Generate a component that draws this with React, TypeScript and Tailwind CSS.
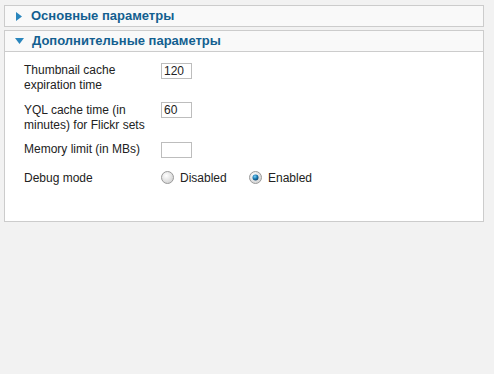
import React from "react";

const font = { fontFamily: '"Liberation Sans", Arial, sans-serif' };

function Radio({ checked }: { checked?: boolean }) {
  return (
    <svg width="13" height="13" viewBox="0 0 13 13" className="block shrink-0">
      <defs>
        <radialGradient id={checked ? "rg1" : "rg0"} cx="0.4" cy="0.35" r="0.7">
          <stop offset="0" stopColor="#ffffff" />
          <stop offset="1" stopColor="#d0d0d0" />
        </radialGradient>
        <radialGradient id="dot" cx="0.4" cy="0.35" r="0.7">
          <stop offset="0" stopColor="#7fd0f5" />
          <stop offset="0.5" stopColor="#1d7fb8" />
          <stop offset="1" stopColor="#0b3f66" />
        </radialGradient>
      </defs>
      <circle cx="6.5" cy="6.5" r="6" fill={`url(#${checked ? "rg1" : "rg0"})`} stroke="#9a9a9a" strokeWidth="1" />
      {checked && <circle cx="6.5" cy="6.5" r="3" fill="url(#dot)" />}
    </svg>
  );
}

function TextInput({ value }: { value: string }) {
  return (
    <div className="w-[31px] h-[16px] border border-[#bdbdbd] bg-white text-[12px] leading-[14px] pl-[2px] text-[#222]">
      {value}
    </div>
  );
}

export default function App() {
  return (
    <div className="w-[494px] h-[374px] bg-[#f2f2f2] pl-[4px] pt-[5px]" style={font}>
      <div className="w-[480px]">
        <div className="h-[22px] border border-[#cccccc] bg-[#f9f9f9] flex items-center pl-[11px]">
          <svg width="6" height="9" viewBox="0 0 6 9" className="mr-[9px]">
            <path d="M0 0 L6 4.5 L0 9 Z" fill="#2a86bd" />
          </svg>
          <span className="text-[13px] font-bold text-[#135f90]">Основные параметры</span>
        </div>
        <div className="mt-[3px] h-[22px] border border-[#cccccc] bg-[#f9f9f9] flex items-center pl-[10px]">
          <svg width="9" height="6" viewBox="0 0 9 6" className="mr-[8px]">
            <path d="M0 0 L9 0 L4.5 6 Z" fill="#2a86bd" />
          </svg>
          <span className="text-[13px] font-bold text-[#135f90]">Дополнительные параметры</span>
        </div>
        <div className="h-[170px] border border-t-0 border-[#cccccc] bg-white pl-[19px] pt-[11px] text-[12px] leading-[15px] text-[#222]">
          <div className="flex h-[40px]">
            <div className="w-[137px]">Thumbnail cache<br />expiration time</div>
            <div><TextInput value="120" /></div>
          </div>
          <div className="flex h-[39px]">
            <div className="w-[137px]">YQL cache time (in<br />minutes) for Flickr sets</div>
            <div className="-mt-[1px]"><TextInput value="60" /></div>
          </div>
          <div className="flex h-[29px]">
            <div className="w-[137px]">Memory limit (in MBs)</div>
            <div><TextInput value="" /></div>
          </div>
          <div className="flex items-start">
            <div className="w-[137px]">Debug mode</div>
            <div className="flex items-start">
              <Radio />
              <span className="ml-[6px] w-[69px]">Disabled</span>
              <Radio checked />
              <span className="ml-[6px]">Enabled</span>
            </div>
          </div>
        </div>
      </div>
    </div>
  );
}
